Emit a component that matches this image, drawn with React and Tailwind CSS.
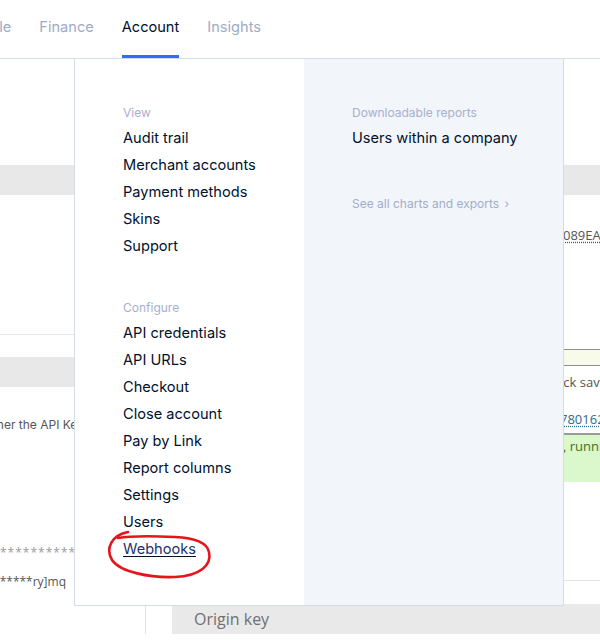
import React from 'react';

// tabs across the top; the first one is cut off by the left edge
const tabs = [
  { label: 'Profile', active: false },
  { label: 'Finance', active: false },
  { label: 'Account', active: true },
  { label: 'Insights', active: false },
];

const viewLinks = ['Audit trail', 'Merchant accounts', 'Payment methods', 'Skins', 'Support'];
const configureLinks = [
  'API credentials',
  'API URLs',
  'Checkout',
  'Close account',
  'Pay by Link',
  'Report columns',
  'Settings',
  'Users',
  'Webhooks',
];

function MenuLabel({ children }) {
  return <div className="text-[12px] leading-[18px] text-[#a7b0cf] mb-[3px]">{children}</div>;
}

function MenuLink({ children, underline }) {
  return (
    <div className="h-[27px] flex items-center">
      <a
        href="#"
        className={
          'text-[14.6px] text-[#00112c] whitespace-nowrap ' +
          (underline ? 'underline underline-offset-2 decoration-[#00112c] text-[#23306a]' : 'no-underline')
        }
      >
        {children}
      </a>
    </div>
  );
}

function AccountMenu() {
  return (
    <div className="absolute left-[74px] top-[59px] w-[490px] h-[547px] flex border-l border-r border-b border-[#d5dce8] bg-white">
      <div className="w-[229px] pl-[48px] pt-[45px]">
        <MenuLabel>View</MenuLabel>
        {viewLinks.map((l) => (
          <MenuLink key={l}>{l}</MenuLink>
        ))}
        <div className="mt-[39px]">
          <MenuLabel>Configure</MenuLabel>
          {configureLinks.map((l) => (
            <MenuLink key={l} underline={l === 'Webhooks'}>
              {l}
            </MenuLink>
          ))}
        </div>
      </div>
      <div className="flex-1 bg-[#f2f5f9] pl-[48px] pt-[45px]">
        <MenuLabel>Downloadable reports</MenuLabel>
        <MenuLink>Users within a company</MenuLink>
        <div className="mt-[43px] text-[12px] leading-[18px] text-[#a3adc9]">
          See all charts and exports <span className="ml-[2px]">&rsaquo;</span>
        </div>
      </div>
    </div>
  );
}

function LeftColumn() {
  return (
    <div className="w-[146px] shrink-0 border-r border-[#e3e3e3] font-['Open_Sans',sans-serif] text-[12px]">
      <div className="h-[106px]" />
      <div className="h-[30px] bg-[#e8e8e8]" />
      <div className="h-[140px] border-b border-[#e5e5e5]" />
      <div className="h-[22px]" />
      <div className="h-[30px] bg-[#e8e8e8]" />
      <div className="mt-[29px] -ml-[31px] whitespace-nowrap text-[#555] font-['Inter',sans-serif] leading-[18px]">
        whether the API Key is valid
      </div>
      <div className="mt-[110px] whitespace-nowrap text-[#9a9a9a] leading-[18px] tracking-[1px]">
        ************************
      </div>
      <div className="mt-[11px] w-[66px] flex justify-end leading-[18px]">
        <span className="whitespace-nowrap text-[#555]">**********ry]mq</span>
      </div>
    </div>
  );
}

function MainColumn() {
  return (
    <div className="flex-1 pl-[26px] font-['Open_Sans',sans-serif] text-[13px]">
      <div className="h-[106px]" />
      <div className="h-[30px] bg-[#e8e8e8]" />
      <div className="grid grid-cols-[391px_1fr] mt-[31px]">
        <div />
        <span className="whitespace-nowrap text-[#555] leading-[18px] underline decoration-dotted underline-offset-2">
          089EA2C41F7
        </span>
      </div>
      <div className="mt-[105px] h-[17px] border-t border-b border-[#8e8e8e] bg-[#f8faea]" />
      <div className="grid grid-cols-[391px_1fr] mt-[7px]">
        <div />
        <span className="-ml-[21px] whitespace-nowrap text-[#555] leading-[18px]">Quick save</span>
      </div>
      <div className="grid grid-cols-[391px_1fr] mt-[19px]">
        <div />
        <span className="-ml-[3px] whitespace-nowrap text-[#2b6c8c] leading-[18px] underline decoration-dotted underline-offset-2">
          7801623
        </span>
      </div>
      <div className="mt-[5px] h-[49px] border-t-2 border-[#9a9a9a] bg-[#dbf7cc] grid grid-cols-[391px_1fr] pt-[2px]">
        <div />
        <span className="whitespace-nowrap text-[#3a7420] leading-[18px]">, running</span>
      </div>
      <div className="mt-[98px] border-b border-[#e5e5e5]" />
      <div className="mt-[23px] h-[30px] bg-[#e9e9e9] flex items-center pl-[22px] text-[16px] text-[#707070]">
        Origin key
      </div>
    </div>
  );
}

export default function App() {
  return (
    <div className="relative w-[600px] h-[640px] overflow-hidden bg-white font-['Inter',sans-serif]">
      <nav className="h-[59px] border-b border-[#d5dce8] flex gap-[28px] -ml-[33px]">
        {tabs.map((t) => (
          <div key={t.label} className="relative h-[58px] pt-[14px]">
            <span
              className={
                'text-[14.6px] leading-[20px] whitespace-nowrap ' +
                (t.active ? 'text-[#00112c]' : 'text-[#9eabc6]')
              }
            >
              {t.label}
            </span>
            {t.active && <div className="absolute left-0 right-0 bottom-0 h-[3px] bg-[#2f6bff]" />}
          </div>
        ))}
      </nav>

      <div className="flex">
        <LeftColumn />
        <MainColumn />
      </div>

      <AccountMenu />

      {/* hand-drawn red circle around Webhooks */}
      <svg className="absolute inset-0 pointer-events-none" width="600" height="640" viewBox="0 0 600 640">
        <path
          d="M 128 532 C 112 535, 105 548, 112 560 C 120 572, 150 578, 175 577 C 200 576, 212 565, 209 552 C 207 542, 195 538, 175 537 C 155 536, 135 535, 118 538"
          fill="none"
          stroke="#e4161c"
          strokeWidth="2.6"
          strokeLinecap="round"
        />
      </svg>
    </div>
  );
}
